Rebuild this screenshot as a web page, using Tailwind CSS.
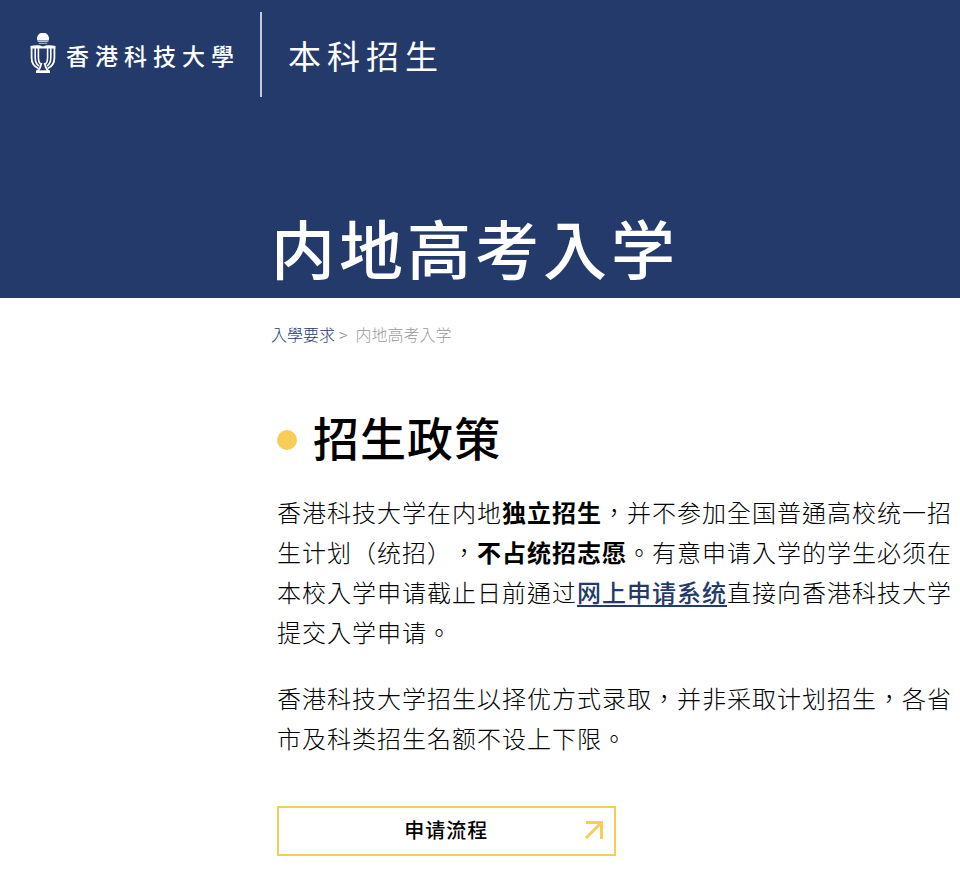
<!DOCTYPE html>
<html lang="zh-Hant">
<head>
    <meta charset="UTF-8">
    <meta name="viewport" content="width=device-width, initial-scale=1.0">
    <title>内地高考入学 - 香港科技大學本科招生</title>
    <script src="https://cdn.jsdelivr.net/npm/@tailwindcss/browser@4"></script>
</head>
<body class="bg-white text-black font-['Noto_Sans_CJK_TC','Noto_Sans_CJK_SC',sans-serif]">

    <header class="bg-[#243a6b] text-white">
        <div class="flex items-center pt-3 pl-[30px]">
            <a href="#" class="flex items-center gap-2.5">
                <!-- Sundial emblem -->
                <svg class="mb-1 w-[26px] h-10" viewBox="0 0 26 40" fill="none" stroke="white" aria-hidden="true">
                    <path d="M7.300 7.500A6 6 0 1 1 18.700 7.500Z" fill="white" stroke="none" />
                    <path d="M7.600 8.500h10.800M8.800 10.300h8.400" stroke-width="1" opacity=".7" />
                    <path d="M0.500 13C5 11.800 10 11.800 13 13.500C16 11.800 21 11.800 25.500 13V15.500H0.500Z" fill="white" stroke="none" />
                    <path d="M1.600 15v10C1.600 30.500 4.500 33.500 8 35.300M24.400 15v10C24.400 30.500 21.500 33.500 18 35.300" stroke-width="1.800" />
                    <path d="M5.200 15v9.500C5.200 29 6.500 31.500 9 33M20.800 15v9.500C20.800 29 19.500 31.500 17 33" stroke-width="1.600" />
                    <path d="M8.400 15v10C8.400 28 9 29.500 10.300 31M17.600 15v10C17.600 28 17 29.500 15.700 31" stroke-width="1.600" />
                    <path d="M11.500 30C11 33.500 9.500 36 7.500 38.300M14.500 30C15 33.500 16.500 36 18.500 38.300" stroke-width="1.800" />
                    <path d="M6 37.300h14V40H6Z" fill="white" stroke="none" />
                </svg>
                <span class="text-[23px] leading-8 font-medium tracking-[6px]">香港科技大學</span>
            </a>
            <div class="ml-5 h-[85px] w-0.5 bg-[#c3c9d6]"></div>
            <a href="#" class="ml-[26px] text-[33px] leading-10 font-normal tracking-[6px]">本科招生</a>
        </div>
        <h1 class="pt-[109px] pb-3 pl-[271px] text-[64px] leading-20 font-medium tracking-[4px]">内地高考入学</h1>
    </header>

    <nav class="flex items-center gap-1 pt-6 pl-[271px] text-base leading-6 font-light" aria-label="breadcrumb">
        <a href="#" class="text-[#243a6b]">入學要求</a>
        <span class="text-[#888888]">&gt;</span>
        <span class="ml-1 text-[#999999]">内地高考入学</span>
    </nav>

    <main class="pt-[62px] pr-1.5 pb-4 pl-[277px]">
        <h2 class="flex items-center gap-4 text-[46px] leading-14 font-medium tracking-[1px]">
            <span class="mt-2 size-5 rounded-full bg-[#f7ce55]"></span>
            招生政策
        </h2>

        <div class="mt-7 space-y-[26px] text-[24px] leading-10 font-light tracking-[1px] [text-spacing-trim:space-all]">
            <p>香港科技大学在内地<strong class="font-bold">独立招生</strong>，并不参加全国普通高校统一招生计划（统招），<strong class="font-bold">不占统招志愿</strong>。有意申请入学的学生必须在本校入学申请截止日前通过<a href="#" class="font-medium text-[#243a6b] underline decoration-2 underline-offset-[3px]">网上申请系统</a>直接向香港科技大学提交入学申请。</p>
            <p>香港科技大学招生以择优方式录取，并非采取计划招生，各省市及科类招生名额不设上下限。</p>
        </div>

        <a href="#" class="relative mt-12 flex w-1/2 items-center justify-center border-2 border-[#f7ce55] pt-1.5 pb-2 text-[20px] leading-8 font-medium tracking-[1px]">
            申请流程
            <svg class="absolute right-[11px] size-[18px]" viewBox="0 0 18 18" fill="none" stroke="#f7ce55" stroke-width="3" aria-hidden="true">
                <path d="M1 1.500H16.500V18M16.500 1.500L1 17" />
            </svg>
        </a>
    </main>

</body>
</html>
